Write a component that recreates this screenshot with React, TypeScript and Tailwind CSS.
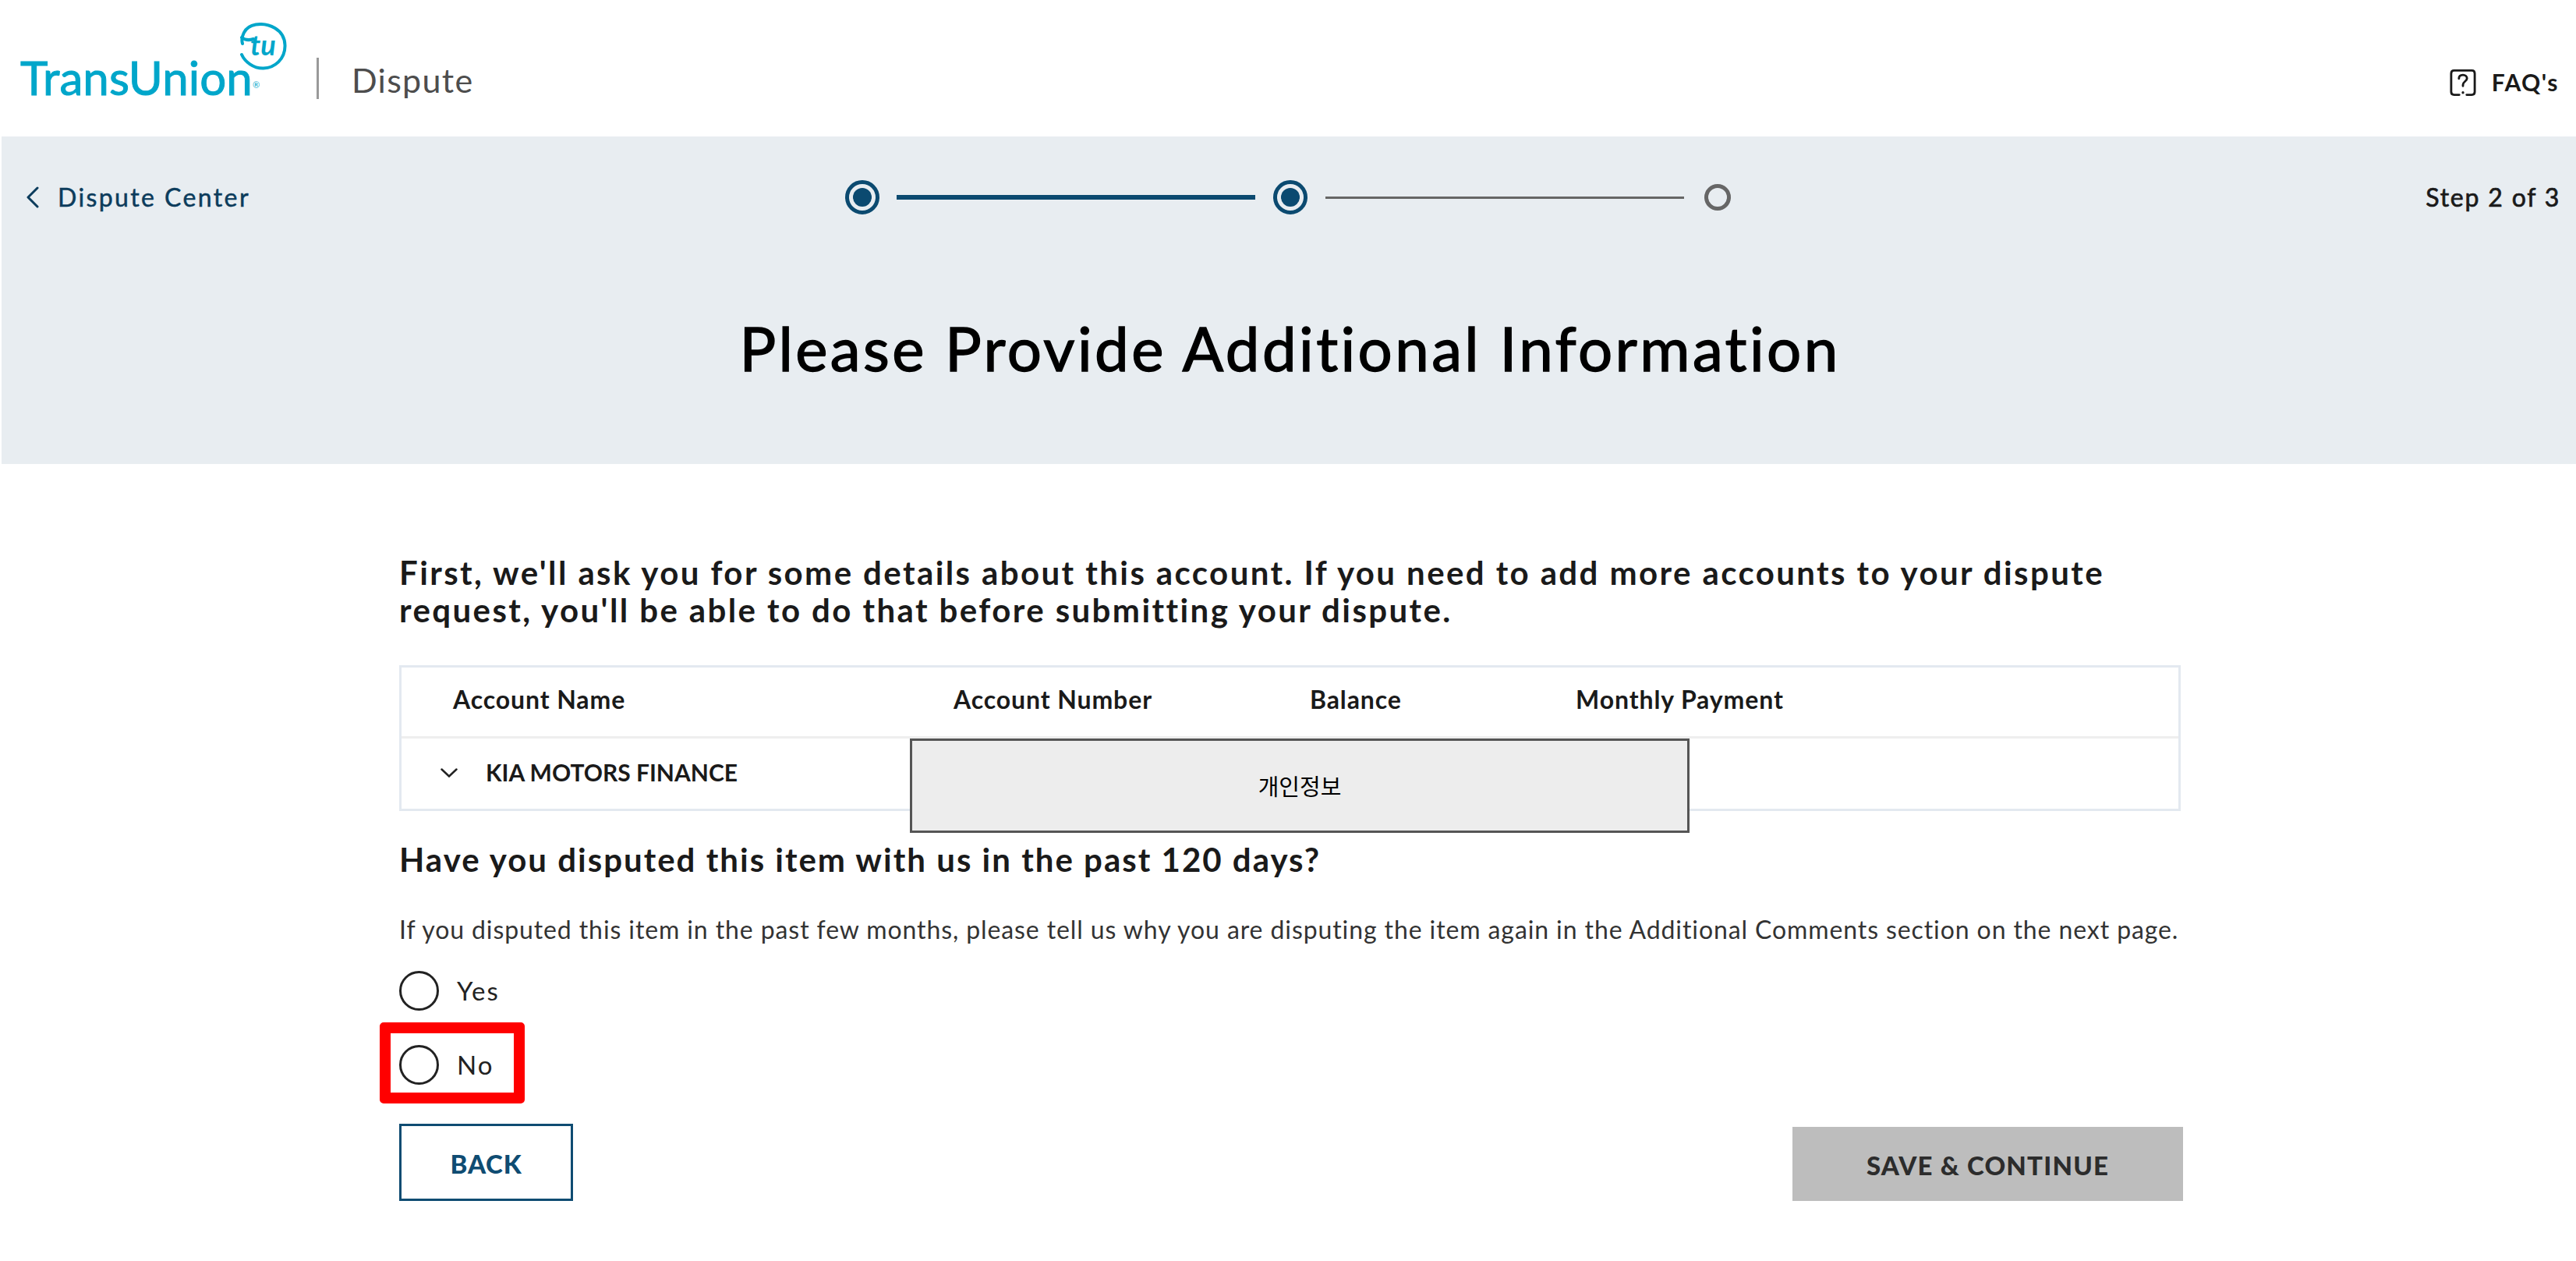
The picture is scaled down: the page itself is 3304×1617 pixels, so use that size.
const font = "font-['Lato','Noto_Sans_CJK_KR',sans-serif]";

function LogoMark() {
  return (
    <svg width="60" height="61" viewBox="0 0 60 61" fill="none" className="absolute left-[282px] top-[-40px]">
      {/* ring with the open side on the left */}
      <path
        d="M3 27C1 20 4 5 20 2.500C36 0 57 8 57.500 29C58 47 44 58 30 58.500C17 59 6 50 2 41"
        stroke="#00a6ca"
        strokeWidth="4"
        strokeLinecap="round"
      />
      <path d="M2 19C8 24 14 22 17 21" stroke="#00a6ca" strokeWidth="4" strokeLinecap="round" />
      <text x="13" y="42" fill="#00a6ca" fontFamily="Lato, sans-serif" fontStyle="italic" fontWeight="700" fontSize="36">
        tu
      </text>
    </svg>
  );
}

function FaqIcon() {
  return (
    <svg width="34" height="36" viewBox="0 0 36 37" fill="none" stroke="#1a1a1a" strokeWidth="3" strokeLinecap="round">
      <path d="M13 35H6C3.500 35 2 33.500 2 31V6C2 3.500 3.500 2 6 2H30C32.500 2 34 3.500 34 6V31C34 33.500 32.500 35 30 35H23" />
      <path d="M12.500 13C12.500 9.500 15 8 18 8C21 8 23.500 9.800 23.500 12.800C23.500 16.500 18 17 18 21.500V23" />
      <circle cx="18" cy="32" r="1" fill="#1a1a1a" strokeWidth="1.500" />
    </svg>
  );
}

function Radio({ label }: { label: string }) {
  return (
    <div className="flex items-center gap-[23px] h-[51px]">
      <span className="w-[51px] h-[51px] rounded-full border-[3px] border-[#222] bg-white" />
      <span className="text-[33px] text-[#222] tracking-[2px]">{label}</span>
    </div>
  );
}

function Step({ done }: { done?: boolean }) {
  if (!done) {
    return <span className="w-[34px] h-[34px] rounded-full border-[5px] border-[#666]" />;
  }
  return (
    <span className="w-[44px] h-[44px] rounded-full border-[5px] border-[#0b4a70] flex items-center justify-center">
      <span className="w-[24px] h-[24px] rounded-full bg-[#0b4a70]" />
    </span>
  );
}

export default function App() {
  return (
    <div className={`${font} bg-white w-full min-h-[1617px] text-black`}>
      <header className="h-[175px] flex items-center justify-between pl-[26px] pr-[22px]">
        <div className="flex items-center pt-[26px]">
          <div className="relative w-[300px] pb-[4px]">
            <span className="block text-[60px] leading-[60px] text-[#00a6ca] tracking-[0.1px] [-webkit-text-stroke:1px_#00a6ca]">TransUnion</span>
            <span className="absolute left-[298px] top-[34px] text-[11px] leading-[11px] text-[#00a6ca]">®</span>
            <LogoMark />
          </div>
          <span className="ml-[80px] w-[3px] h-[53px] bg-[#999]" />
          <span className="ml-[42px] pt-[3px] text-[43px] leading-[53px] text-[#4d4d4d] tracking-[1.3px]">Dispute</span>
        </div>
        <div className="flex items-center gap-[20px] pt-[36px]">
          <FaqIcon />
          <span className="text-[30px] font-bold text-[#1a1a1a] tracking-[1.5px]">FAQ's</span>
        </div>
      </header>

      <section className="ml-[2px] h-[420px] bg-[#e8edf1] pt-[56px]">
        <div className="relative flex items-center justify-between h-[44px] pl-[31px] pr-[20px]">
          <div className="flex items-center gap-[23px]">
            <svg width="18" height="28" viewBox="0 0 18 28" fill="none" stroke="#0c3c5c" strokeWidth="3" strokeLinecap="round" strokeLinejoin="round">
              <path d="M15 2L3 14L15 26" />
            </svg>
            <span className="text-[32px] text-[#0c3c5c] tracking-[2.4px] [-webkit-text-stroke:0.5px_#0c3c5c]">Dispute Center</span>
          </div>
          <div className="absolute left-[1082px] top-0 h-[44px] flex items-center">
            <Step done />
            <span className="ml-[22px] mr-[23px] w-[460px] h-[6px] bg-[#0b4a70]" />
            <Step done />
            <span className="ml-[23px] mr-[26px] w-[460px] h-[3px] bg-[#666]" />
            <Step />
          </div>
          <span className="text-[32px] text-[#1a1a1a] tracking-[1.8px] [-webkit-text-stroke:0.7px_#1a1a1a]">Step 2 of 3</span>
        </div>
        <h1 className="mt-[126px] pl-[3px] text-center text-[78px] leading-[90px] tracking-[3.400px] [-webkit-text-stroke:1.4px_#000]">
          Please Provide Additional Information
        </h1>
      </section>

      <main className="ml-[512px] w-[2288px] pt-[115px]">
        <p className="text-[42px] leading-[48px] font-bold text-[#1a1a1a] tracking-[2.4px] w-[2260px]">
          First, we'll ask you for some details about this account. If you need to add more accounts to your dispute
          request, you'll be able to do that before submitting your dispute.
        </p>

        <div className="mt-[47px] w-[2285px] h-[187px] border-[3px] border-[#e3e9f0]">
          <div className="h-[91px] pb-[7px] flex items-center text-[32px] font-bold text-[#1a1a1a] tracking-[0.9px] border-b-[3px] border-[#eeeeee]">
            <span className="ml-[66px] w-[642px]">Account Name</span>
            <span className="w-[457px]">Account Number</span>
            <span className="w-[341px]">Balance</span>
            <span>Monthly Payment</span>
          </div>
          <div className="relative h-[90px] pb-[3px] flex items-center">
            <svg width="22" height="12" viewBox="0 0 22 12" fill="none" stroke="#222" strokeWidth="2.500" strokeLinecap="round" className="ml-[50px]">
              <path d="M1.500 1.500L11 10.500L20.500 1.500" />
            </svg>
            <span className="ml-[36px] text-[30px] font-bold text-[#1a1a1a]">KIA MOTORS FINANCE</span>
            <div className="absolute left-[652px] top-0 w-[1000px] h-[121px] bg-[#ededed] border-[3px] border-[#555] flex items-center justify-center text-[29px] font-['Noto_Sans_CJK_KR',sans-serif]">
              개인정보
            </div>
          </div>
        </div>

        <h2 className="mt-[34px] text-[42px] leading-[56px] font-bold text-[#1a1a1a] tracking-[2px]">
          Have you disputed this item with us in the past 120 days?
        </h2>

        <p className="mt-[42px] text-[32px] leading-[40px] text-[#333] tracking-[0.9px] whitespace-nowrap">
          If you disputed this item in the past few months, please tell us why you are disputing the item again in the Additional Comments section on the next page.
        </p>

        <div className="mt-[33px] flex flex-col gap-[44px]">
          <Radio label="Yes" />
          <div className="relative">
            <Radio label="No" />
            <div className="absolute left-[-25px] top-[-29px] w-[186px] h-[104px] border-[14px] border-[#ff0000] rounded-[5px]" />
          </div>
        </div>

        <div className="mt-[50px] flex items-end justify-between">
          <button className="w-[223px] h-[99px] pt-[4px] border-[3px] border-[#0f4c72] text-[33px] font-black text-[#0f4c72] tracking-[0.8px]">
            BACK
          </button>
          <button className="w-[501px] h-[95px] pt-[4px] bg-[#bdbdbd] text-[33px] font-black text-[#2c2c2c] tracking-[1.200px]">
            SAVE &amp; CONTINUE
          </button>
        </div>
      </main>
    </div>
  );
}
